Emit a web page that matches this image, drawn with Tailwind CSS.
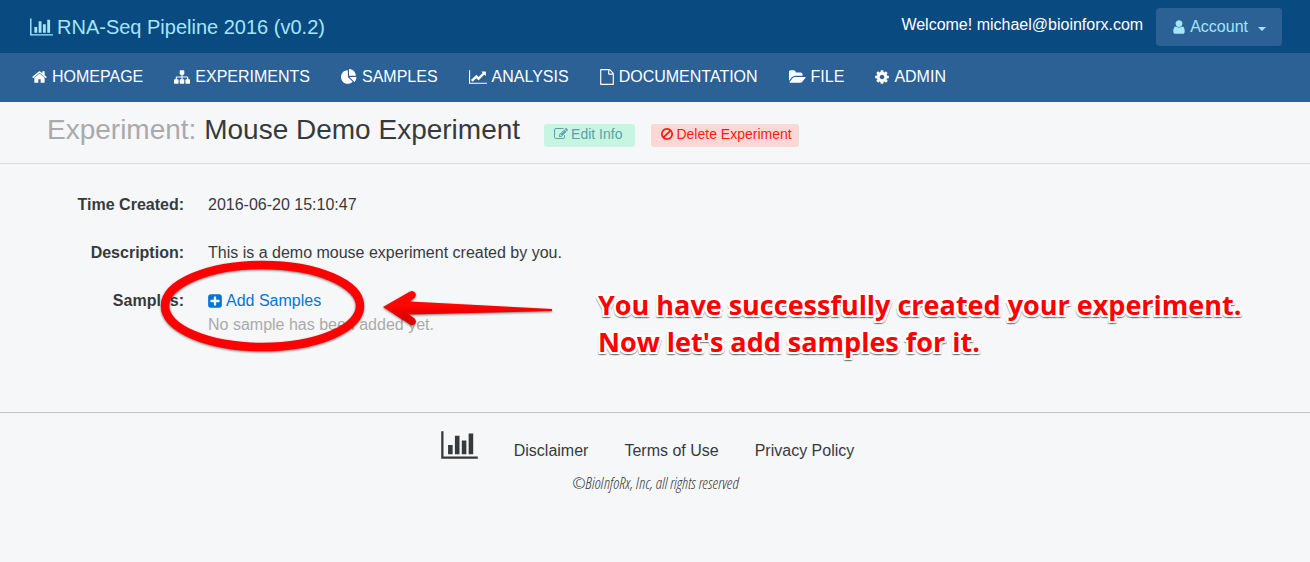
<!DOCTYPE html>
<html lang="en">
<head>
<meta charset="utf-8">
<meta name="viewport" content="width=device-width, initial-scale=1">
<title>RNA-Seq Pipeline 2016 (v0.2)</title>
<script src="https://cdn.jsdelivr.net/npm/@tailwindcss/browser@4"></script>
</head>
<body class="min-h-screen bg-[#f6f7f9] font-['Liberation_Sans',Arial,sans-serif] text-base text-[#373a3c]">

<svg class="hidden" aria-hidden="true">
  <symbol id="bar-chart" viewBox="0 0 2048 1792"><path d="M640 896v512h-256v-512h256zm384-512v1024h-256v-1024h256zm1024 1152v128h-2048v-1536h128v1408h1920zm-640-896v768h-256v-768h256zm384-384v1152h-256v-1152h256z"/></symbol>
</svg>

<header class="flex h-[53px] items-center justify-between bg-[#094a80] pr-7 pl-[30px]">
  <a href="#" class="flex items-center gap-1 text-xl text-[#a5e5fb]">
    <svg class="h-5 w-[23px] fill-current"><use href="#bar-chart"/></svg>
    RNA-Seq Pipeline 2016 (v0.2)
  </a>
  <div class="flex items-center gap-[13px]">
    <span class="pb-1 text-white">Welcome! michael@bioinforx.com</span>
    <button type="button" class="flex h-[38px] items-center rounded bg-[#2b6195] pr-4 pl-[17px] text-[#a5e5fb]">
      <svg class="mr-[5px] h-4 w-3 fill-current" viewBox="256 0 1280 1792"><path d="M1536 1399q0 109-62.5 187t-150.5 78h-854q-88 0-150.5-78t-62.5-187q0-85 8.5-160.5t31.5-152 58.5-131 94-89 134.5-34.5q131 128 313 128t313-128q76 0 134.5 34.5t94 89 58.5 131 31.5 152 8.500 160.500zm-256-887q0 159-112.500 271.500t-271.500 112.500-271.500-112.500-112.500-271.500 112.500-271.500 271.500-112.500 271.500 112.500 112.500 271.500z"/></svg>
      Account
      <svg class="mt-1 ml-[10px] h-1 w-2 fill-current" viewBox="0 0 8 4"><path d="M0 0h8L4 4z"/></svg>
    </button>
  </div>
</header>

<nav class="flex h-[49px] items-center gap-[31px] bg-[#2b6195] pb-px pl-8 text-white">
  <a href="#" class="flex items-center gap-[5px]">
    <svg class="h-4 w-[15px] fill-current" viewBox="64 0 1664 1792"><path d="M1472 992v480q0 26-19 45t-45 19h-384v-384h-256v384h-384q-26 0-45-19t-19-45v-480q0-1 .5-3t.5-3l575-474 575 474q1 2 1 6zm223-69l-62 74q-8 9-21 11h-3q-13 0-21-7l-692-577-692 577q-12 8-24 7-13-2-21-11l-62-74q-8-10-7-23.5t11-21.5l719-599q32-26 76-26t76 26l244 204v-195q0-14 9-23t23-9h192q14 0 23 9t9 23v408l219 182q10 8 11 21.5t-7 23.5z"/></svg>
    HOMEPAGE
  </a>
  <a href="#" class="flex items-center gap-[5px]">
    <svg class="h-4 w-4 fill-current" viewBox="0 0 1792 1792"><path d="M1792 1248v320q0 40-28 68t-68 28h-320q-40 0-68-28t-28-68v-320q0-40 28-68t68-28h96v-192h-512v192h96q40 0 68 28t28 68v320q0 40-28 68t-68 28h-320q-40 0-68-28t-28-68v-320q0-40 28-68t68-28h96v-192h-512v192h96q40 0 68 28t28 68v320q0 40-28 68t-68 28h-320q-40 0-68-28t-28-68v-320q0-40 28-68t68-28h96v-192q0-52 38-90t90-38h512v-192h-96q-40 0-68-28t-28-68v-320q0-40 28-68t68-28h320q40 0 68 28t28 68v320q0 40-28 68t-68 28h-96v192h512q52 0 90 38t38 90v192h96q40 0 68 28t28 68z"/></svg>
    EXPERIMENTS
  </a>
  <a href="#" class="flex items-center gap-[5px]">
    <svg class="h-4 w-4 fill-current" viewBox="0 0 1792 1792"><path d="M768 890l546 546q-106 108-247.5 168t-298.5 60q-209 0-385.5-103t-279.5-279.5-103-385.5 103-385.5 279.5-279.5 385.5-103v762zm187 6h773q0 157-60 298.5t-168 247.5zm709-128h-768v-768q209 0 385.5 103t279.5 279.5 103 385.5z"/></svg>
    SAMPLES
  </a>
  <a href="#" class="flex items-center gap-[5px]">
    <svg class="h-4 w-[18px] fill-current" viewBox="0 0 2048 1792"><path d="M2048 1536v128h-2048v-1536h128v1408h1920zm-128-1248v435q0 21-19.5 29.5t-35.5-7.5l-121-121-633 633q-10 10-23 10t-23-10l-233-233-416 416-192-192 585-585q10-10 23-10t23 10l233 233 464-464-121-121q-16-16-7.5-35.5t29.5-19.5h435q14 0 23 9t9 23z"/></svg>
    ANALYSIS
  </a>
  <a href="#" class="flex items-center gap-[5px]">
    <svg class="h-4 w-[14px] fill-current" viewBox="128 0 1536 1792"><path d="M1596 380q28 28 48 76t20 88v1152q0 40-28 68t-68 28h-1344q-40 0-68-28t-28-68v-1600q0-40 28-68t68-28h896q40 0 88 20t76 48zm-444-244v376h376q-10-29-22-41l-313-313q-12-12-41-22zm384 1528v-1024h-416q-40 0-68-28t-28-68v-416h-768v1536h1280z"/></svg>
    DOCUMENTATION
  </a>
  <a href="#" class="flex items-center gap-[5px]">
    <svg class="h-4 w-[17px] fill-current" viewBox="0 0 1815 1792"><path d="M1815 952q0 31-31 66l-336 396q-43 51-120.5 86.5t-143.5 35.5h-1088q-34 0-60.5-13t-26.5-43q0-31 31-66l336-396q43-51 120.5-86.5t143.5-35.5h1088q34 0 60.5 13t26.5 43zm-343-344v160h-832q-94 0-197 47.5t-164 119.5l-337 396-5 6q0-4-.5-12.5t-.5-12.5v-960q0-92 66-158t158-66h320q92 0 158 66t66 158v32h544q92 0 158 66t66 158z"/></svg>
    FILE
  </a>
  <a href="#" class="flex items-center gap-[5px]">
    <svg class="h-4 w-[14px] fill-current" viewBox="128 0 1536 1792"><path d="M1152 896q0-106-75-181t-181-75-181 75-75 181 75 181 181 75 181-75 75-181zm512-109v222q0 12-8 23t-20 13l-185 28q-19 54-39 91 35 50 107 138 10 12 10 25t-9 23q-27 37-99 108t-94 71q-12 0-26-9l-138-108q-44 23-91 38-16 136-29 186-7 28-36 28h-222q-14 0-24.5-8.5t-11.5-21.5l-28-184q-49-16-90-37l-141 107q-10 9-25 9-14 0-25-11-126-114-165-168-7-10-7-23 0-12 8-23 15-21 51-66.5t54-70.5q-27-50-41-99l-183-27q-13-2-21-12.5t-8-23.5v-222q0-12 8-23t19-13l186-28q14-46 39-92-40-57-107-138-10-12-10-24 0-10 9-23 26-36 98.5-107.5t94.5-71.5q13 0 26 10l138 107q44-23 91-38 16-136 29-186 7-28 36-28h222q14 0 24.5 8.5t11.5 21.5l28 184q49 16 90 37l142-107q9-9 24-9 13 0 25 10 129 119 165 170 7 8 7 22 0 12-8 23-15 21-51 66.5t-54 70.5q26 50 41 98l183 28q13 2 21 12.5t8 23.5z"/></svg>
    ADMIN
  </a>
</nav>

<main>
  <div class="flex items-start border-b border-[#dadcdf] pt-[11px] pb-4 pl-[47px]">
    <h1 class="text-[28px] leading-[34px]"><span class="text-[#aaaaaa]">Experiment:</span> Mouse Demo Experiment</h1>
    <div class="mt-[11px] ml-6 flex gap-4 text-sm">
      <button type="button" class="flex h-[23px] items-center gap-[3px] rounded-[3px] bg-[#c6f6e2] pr-[13px] pb-[3px] pl-[10px] text-[#5f9ea8]">
        <svg class="h-[14px] w-[14px] fill-current" viewBox="0 0 1792 1792"><path d="M888 1184l116-116-152-152-116 116v56h96v96h56zm440-720q-16-16-33 1l-350 350q-17 17-1 33t33-1l350-350q17-17 1-33zm80 594v190q0 119-84.5 203.5t-203.5 84.5h-832q-119 0-203.5-84.5t-84.5-203.5v-832q0-119 84.5-203.5t203.5-84.5h832q63 0 117 25 15 7 18 23 3 17-9 29l-49 49q-14 14-32 8-23-6-45-6h-832q-66 0-113 47t-47 113v832q0 66 47 113t113 47h832q66 0 113-47t47-113v-126q0-13 9-22l64-64q15-15 35-7t20 29zm-96-738l288 288-672 672h-288v-288zm444 132l-92 92-288-288 92-92q28-28 68-28t68 28l152 152q28 28 28 68t-28 68z"/></svg>
        Edit Info
      </button>
      <button type="button" class="flex h-[23px] items-center gap-[3px] rounded-[3px] bg-[#fad8d6] pr-[7px] pb-[3px] pl-[10px] text-[#ff1a10]">
        <svg class="h-[14px] w-3 fill-current" viewBox="128 0 1536 1792"><path d="M1440 893q0-161-87-295l-754 753q137 89 297 89 111 0 211.5-43.5t173.5-116.5 116-174.5 43-212.5zm-999 299l755-754q-135-91-300-91-148 0-273 73t-198 199-73 274q0 162 89 299zm1223-299q0 157-61 300t-163.5 246-245 164-298.5 61-298.5-61-245-164-163.5-246-61-300 61-299.5 163.5-245.5 245-164 298.5-61 298.5 61 245 164 163.5 245.5 61 299.5z"/></svg>
        Delete Experiment
      </button>
    </div>
  </div>

  <dl class="relative grid grid-cols-[184px_1fr] gap-x-6 gap-y-6 pt-[29px] pb-[75px]">
    <dt class="text-right font-bold">Time Created:</dt>
    <dd>2016-06-20 15:10:47</dd>
    <dt class="text-right font-bold">Description:</dt>
    <dd>This is a demo mouse experiment created by you.</dd>
    <dt class="text-right font-bold">Samples:</dt>
    <dd>
      <a href="#" class="flex w-fit items-center gap-1 text-[#0275d8]">
        <svg class="h-4 w-[14px] fill-current" viewBox="128 0 1536 1792"><path fill-rule="evenodd" d="M416 128h960q119 0 203.500 84.500t84.500 203.500v960q0 119-84.500 203.500t-203.500 84.500h-960q-119 0-203.500-84.500t-84.500-203.500v-960q0-119 84.500-203.500t203.500-84.500zM768 448v320h-320q-64 0-64 64v128q0 64 64 64h320v320q0 64 64 64h128q64 0 64-64v-320h320q64 0 64-64v-128q0-64-64-64h-320v-320q0-64-64-64h-128q-64 0-64 64z"/></svg>
        Add Samples
      </a>
      <p class="text-[#aaaaaa]">No sample has been added yet.</p>
    </dd>

    <!-- tutorial callout: ring, arrow and note laid over the details -->
    <svg class="pointer-events-none absolute top-[90px] left-[156px] h-[106px] w-[400px] drop-shadow-[0_1px_1px_rgb(0_0_0/0.5)]" viewBox="0 0 400 106" aria-hidden="true">
      <defs><linearGradient id="arrow-red" x1="0" y1="0" x2="0" y2="1"><stop offset="0.4" stop-color="#ff0600"/><stop offset="0.8" stop-color="#dc0000"/></linearGradient></defs>
      <ellipse cx="106.500" cy="52" rx="97.500" ry="41" fill="none" stroke="#ff0000" stroke-width="8.500"/>
      <path fill="url(#arrow-red)" d="M227 53L254 37.500q3-1.500 5 1t-.500 5.500L254 47.500L396 55v2L253 60.500l5 3.500q3 2.500 1 5.500t-5 1z"/>
    </svg>
    <div class="absolute top-[122px] left-[598px] font-['Open_Sans','Noto_Sans',sans-serif] text-[27px] leading-[37px] font-bold whitespace-nowrap text-[#ff0000] [text-shadow:2px_0_0_#fff,-2px_0_0_#fff,0_2px_0_#fff,0_-2px_0_#fff,2px_2px_0_#fff,-2px_2px_0_#fff,2px_-2px_0_#fff,-2px_-2px_0_#fff,0_3px_1px_#777,2px_3px_1px_#888,-2px_3px_1px_#888]">
      <p>You have successfully created your experiment.</p>
      <p>Now let's add samples for it.</p>
    </div>
  </dl>
</main>

<footer class="border-t border-[#c3c5c8] pt-4">
  <div class="flex items-end justify-center gap-9 pr-[15px]">
    <svg class="mb-[2px] h-8 w-[37px] fill-current"><use href="#bar-chart"/></svg>
    <a href="#">Disclaimer</a>
    <a href="#">Terms of Use</a>
    <a href="#">Privacy Policy</a>
  </div>
  <p class="mt-2 text-center font-['Open_Sans_Condensed_Light','Open_Sans_Condensed','Open_Sans',sans-serif] text-base leading-6 font-light italic">©BioInfoRx, Inc, all rights reserved</p>
</footer>
</body>
</html>
